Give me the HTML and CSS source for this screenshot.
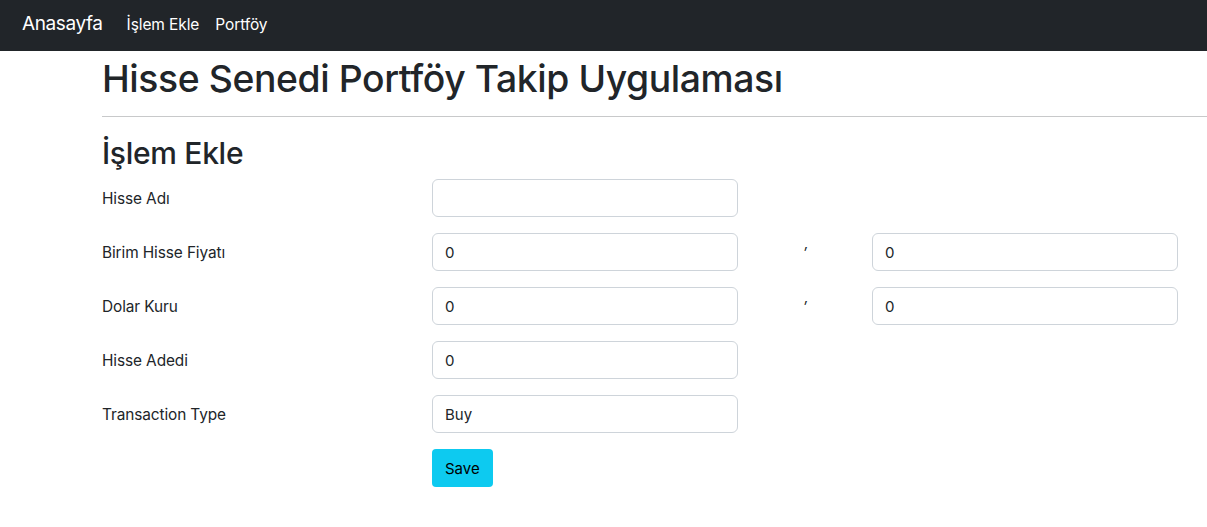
FILE: index.html
```html
<!DOCTYPE html>
<html lang="tr">
<head>
<meta charset="utf-8">
<title>Hisse Senedi Portföy Takip Uygulaması</title>
<link rel="stylesheet" href="styles.css">
</head>
<body>
<nav class="navbar">
  <a class="brand" href="#">Anasayfa</a>
  <ul class="nav">
    <li><a href="#">İşlem Ekle</a></li>
    <li><a href="#">Portföy</a></li>
  </ul>
</nav>
<main class="main">
  <h1 class="title">Hisse Senedi Portföy Takip Uygulaması</h1>
  <hr class="rule">
  <h2 class="subtitle">İşlem Ekle</h2>
  <form class="form">
    <div class="row">
      <label class="label">Hisse Adı</label>
      <input class="input" type="text" value="">
    </div>
    <div class="row">
      <label class="label">Birim Hisse Fiyatı</label>
      <input class="input" type="text" value="0">
      <span class="sep">′</span>
      <input class="input" type="text" value="0">
    </div>
    <div class="row">
      <label class="label">Dolar Kuru</label>
      <input class="input" type="text" value="0">
      <span class="sep">′</span>
      <input class="input" type="text" value="0">
    </div>
    <div class="row">
      <label class="label">Hisse Adedi</label>
      <input class="input" type="text" value="0">
    </div>
    <div class="row">
      <label class="label">Transaction Type</label>
      <input class="input" type="text" value="Buy">
    </div>
    <div class="row">
      <span class="label"></span>
      <button class="btn" type="button">Save</button>
    </div>
  </form>
</main>
</body>
</html>
```

FILE: styles.css
```css
* { box-sizing: border-box; }
html, body { margin: 0; padding: 0; }
body {
  font-family: Inter, "Noto Sans", "Liberation Sans", sans-serif;
  font-size: 16px;
  color: #212529;
  background: #fff;
  overflow: hidden;
}
.navbar {
  height: 51px;
  background: #212529;
  display: flex;
  align-items: center;
  padding: 0 22px 4px 22px;
}
.brand {
  color: #fff;
  text-decoration: none;
  font-size: 19px;
  margin-right: 24px;
  letter-spacing: -0.4px;
}
.nav {
  list-style: none;
  margin: 0;
  padding: 0;
  display: flex;
  gap: 16px;
}
.nav a {
  color: #fff;
  text-decoration: none;
  font-size: 15.5px;
  letter-spacing: -0.1px;
}
.main {
  padding-left: 102px;
}
.title {
  margin: 0;
  padding-top: 4px;
  font-size: 37.3px;
  font-weight: 500;
  line-height: 48px;
  letter-spacing: -0.4px;
}
.rule {
  margin: 13px 0 0 0;
  border: 0;
  border-top: 1px solid #c8c9ca;
}
.subtitle {
  margin: 17px 0 0 0;
  font-size: 30px;
  font-weight: 500;
  line-height: 38px;
  letter-spacing: -0.3px;
}
.form {
  margin-top: 7px;
  display: flex;
  flex-direction: column;
  gap: 16px;
}
.row {
  display: grid;
  grid-template-columns: 330px 306px 134px 306px;
  align-items: center;
  height: 38px;
}
.label {
  font-size: 15.4px;
  letter-spacing: -0.1px;
}
.input {
  height: 38px;
  width: 306px;
  border: 1px solid #ced4da;
  border-radius: 6px;
  padding: 0 12px;
  font-family: inherit;
  font-size: 15px;
  color: #212529;
  background: #fff;
}
.sep {
  text-align: center;
  font-size: 15px;
  font-style: italic;
}
.btn {
  justify-self: start;
  height: 38px;
  padding: 0 13px;
  border: 0;
  border-radius: 4px;
  background: #0dcaf0;
  color: #000;
  font-family: inherit;
  font-size: 15px;
}
```
